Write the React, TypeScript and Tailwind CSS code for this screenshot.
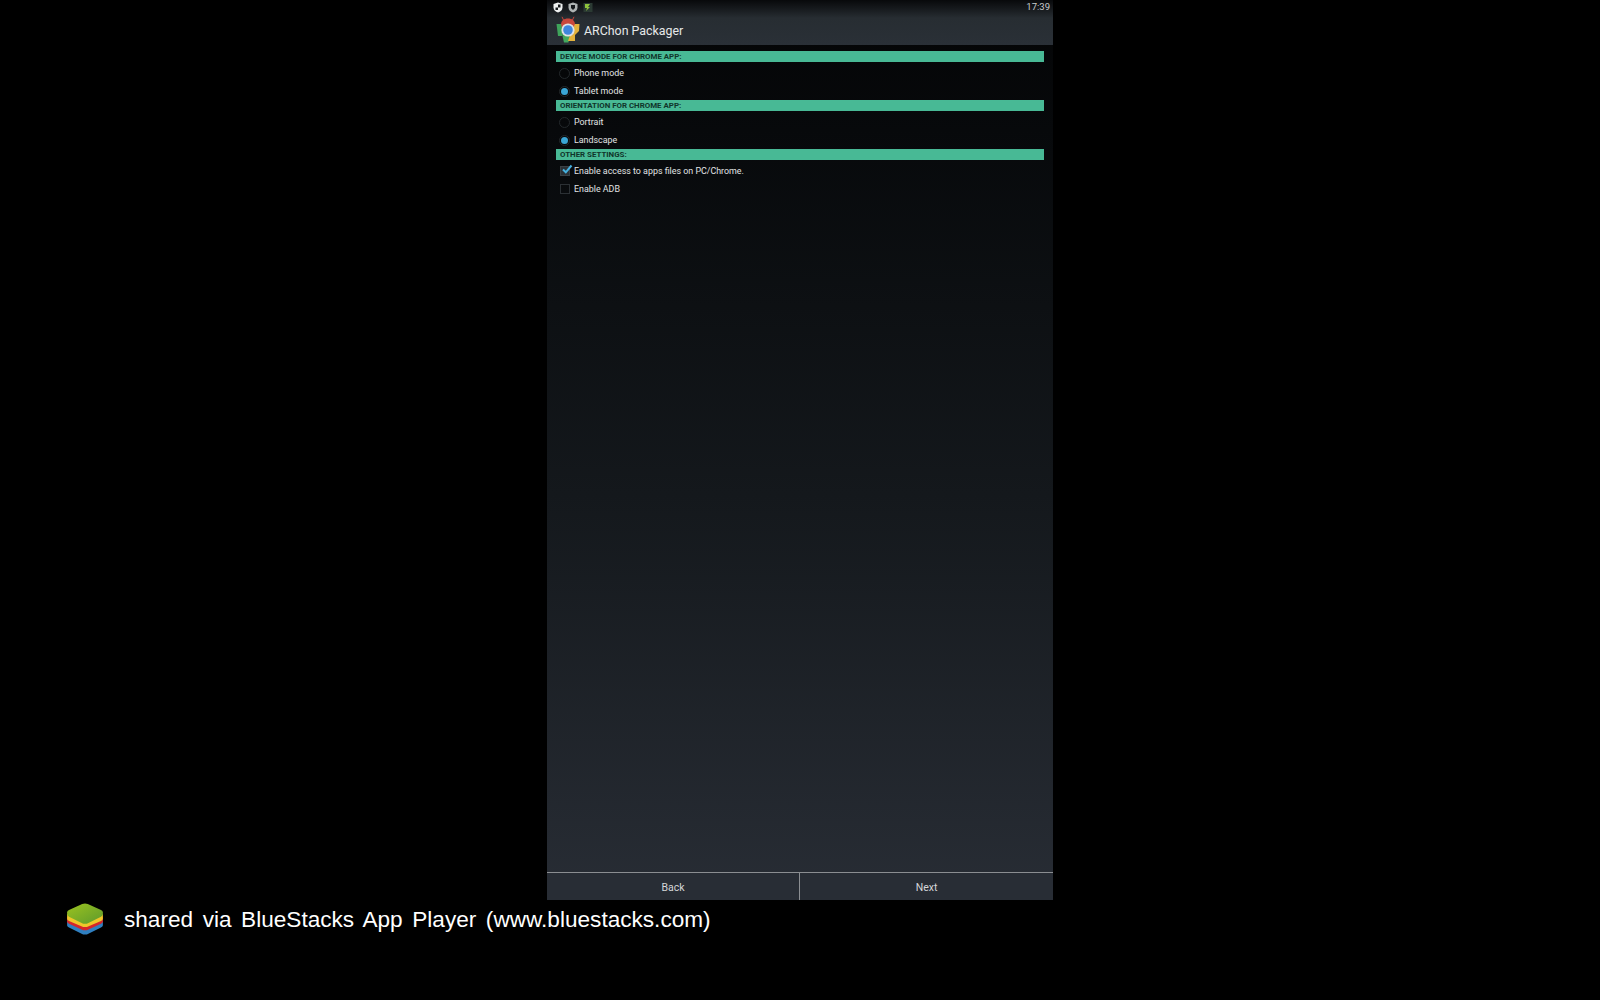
const settingGroups = [
    {
        title: "DEVICE MODE FOR CHROME APP:",
        type: "radio",
        options: [
            { label: "Phone mode", checked: false },
            { label: "Tablet mode", checked: true },
        ],
    },
    {
        title: "ORIENTATION FOR CHROME APP:",
        type: "radio",
        options: [
            { label: "Portrait", checked: false },
            { label: "Landscape", checked: true },
        ],
    },
    {
        title: "OTHER SETTINGS:",
        type: "checkbox",
        options: [
            { label: "Enable access to apps files on PC/Chrome.", checked: true },
            { label: "Enable ADB", checked: false },
        ],
    },
];

const RadioMark = ({ checked }: { checked: boolean }) => (
    <span className="w-[11px] h-[11px] rounded-full border border-[#23282b] flex items-center justify-center shrink-0">
        {checked && <span className="w-[7px] h-[7px] rounded-full bg-[#3aa6d6]" />}
    </span>
);

const CheckMark = ({ checked }: { checked: boolean }) => (
    <span className={`relative ml-[1px] w-[10px] h-[10px] border shrink-0 ${checked ? "border-[#3a4044] bg-[#2a3035]" : "border-[#2b3034]"}`}>
        {checked && (
            <svg viewBox="0 0 12 12" className="absolute -top-[4px] left-[0px] w-[12px] h-[12px]">
                <path d="M2 6.5 L4.8 9.3 L10.5 2.5" fill="none" stroke="#45b0de" strokeWidth="2" />
            </svg>
        )}
    </span>
);

const AppIcon = () => (
    <svg viewBox="0 0 24 27" className="w-[24px] h-[27px] shrink-0 -mt-[2px]">
        <path d="M7.5 4 L6 0.8 M16.5 4 L18 0.8" stroke="#c8453a" strokeWidth="1" />
        <path d="M5 9 C5 4.5 8 2.5 12 2.5 C16 2.5 19 4.5 19 9 Z" fill="#c9473c" />
        <path d="M0.5 8 H6 V20 H2 Z" fill="#3fa45b" />
        <path d="M18 8 H23.5 L23 15 L19 19 V22 H16 Z" fill="#e3b23c" />
        <path d="M6 18 H14 L12.5 26.5 H8 Z" fill="#43a85e" />
        <path d="M14 19 H19 V25 H12 Z" fill="#e3b23c" />
        <path d="M5 8 H19 L17 12 H6 Z" fill="#cf4a3d" />
        <circle cx="12" cy="14" r="6.6" fill="#dfe3e6" />
        <circle cx="12" cy="14" r="4.8" fill="#3f86de" />
    </svg>
);

const ShieldIcon = ({ fill, inner }: { fill: string; inner: string }) => (
    <svg viewBox="0 0 10 11" className="w-[10px] h-[11px]">
        <path d="M5 0.5 L9.5 2 V5.5 C9.5 8 7.5 9.8 5 10.5 C2.5 9.8 0.5 8 0.5 5.5 V2 Z" fill={fill} />
        <path d={inner} fill="#14181b" />
    </svg>
);

const BlueStacksLogo = () => (
    <svg viewBox="0 0 40 34" className="w-[38px] h-[32px] shrink-0 -mt-[1px]">
        <defs>
            <linearGradient id="stackTop" x1="0" y1="0" x2="1" y2="1">
                <stop offset="0" stopColor="#9cc31f" />
                <stop offset="1" stopColor="#5d9a2c" />
            </linearGradient>
        </defs>
        <path d="M1 19 Q1 17 3 16 L20 8 L37 16 Q39 17 39 19 V24 Q39 25 37 26 L22 33.5 H18 L3 26 Q1 25 1 24 Z" fill="#2f7fc0" />
        <path d="M1 15 L20 5 L39 15 V20 Q39 21 37 22 L22 29 H18 L3 22 Q1 21 1 20 Z" fill="#d5262b" />
        <path d="M1 12 L20 3 L39 12 V17 Q39 18 37 19 L22 25.5 H18 L3 19 Q1 18 1 17 Z" fill="#efc62a" />
        <path d="M1 10 Q1 8.5 3 7.5 L17 1 Q20 0 23 1 L37 7.5 Q39 8.5 39 10 V12 Q39 13.5 37 14.5 L22 22 H18 L3 14.5 Q1 13.5 1 12 Z" fill="url(#stackTop)" />
    </svg>
);

const App = () => {
    return (
        <div className="w-[1600px] h-[1000px] bg-black flex flex-col overflow-hidden font-['Roboto',sans-serif]">
            <div className="ml-[547px] w-[506px] h-[900px] flex flex-col bg-gradient-to-b from-[#040506] via-[#14181c] via-55% to-[#282d35]">
                <div className="h-[45px] shrink-0 bg-gradient-to-b from-[#08090b] via-[#272d32] via-40% to-[#2a3037] flex flex-col">
                    <div className="h-[15px] flex items-center justify-between pl-[6px] pr-[3px]">
                        <div className="flex items-center gap-[5px]">
                            <ShieldIcon fill="#eef0f0" inner="M5 2.5 H7.5 V5.5 H5 Z M2.5 5.5 H5 V8 H2.5 Z" />
                            <ShieldIcon fill="#aeb3b3" inner="M3 3 H7 V6 L5 8 L3 6 Z" />
                            <svg viewBox="0 0 10 11" className="w-[10px] h-[11px]">
                                <rect x="0.5" y="1" width="9" height="9" fill="#2b3a33" />
                                <path d="M2 2 H7 L5 5 H7 L3 9 L4 6 H2 Z" fill="#8fc43c" />
                            </svg>
                        </div>
                        <span className="text-[9.5px] text-[#c9cccd]">17:39</span>
                    </div>
                    <div className="flex items-center gap-[4px] pl-[9px] h-[30px]">
                        <AppIcon />
                        <span className="text-[12.4px] text-[#e6e8e9] pt-[2px]">ARChon Packager</span>
                    </div>
                </div>

                <div className="flex-1 flex flex-col pt-[6px] px-[9px]">
                    {settingGroups.map((group) => (
                        <div key={group.title} className="flex flex-col">
                            <div className="h-[11px] bg-[#48b995] pl-[4px] flex items-center text-[7.9px] font-bold text-[#10352a]">
                                {group.title}
                            </div>
                            <div className="flex flex-col pt-[2px]">
                                {group.options.map((option) => (
                                    <div key={option.label} className="h-[18px] flex items-center gap-[4px] pl-[3px] text-[8.9px] text-[#e2e4e5]">
                                        {group.type === "radio" ? <RadioMark checked={option.checked} /> : <CheckMark checked={option.checked} />}
                                        <span className="pt-[2px]">{option.label}</span>
                                    </div>
                                ))}
                            </div>
                        </div>
                    ))}
                </div>

                <div className="h-[28px] shrink-0 border-t border-[#8b8e92] bg-[#282d35] flex text-[10.5px] text-[#d4d6d8]">
                    <div className="w-[253px] border-r border-[#8b8e92] flex items-center justify-center pt-[2px]">Back</div>
                    <div className="flex-1 flex items-center justify-center pt-[2px]">Next</div>
                </div>
            </div>

            <div className="flex items-center pl-[66px] pt-[1px] h-[38px]">
                <BlueStacksLogo />
                <span className="ml-[20px] text-[22.6px] text-white whitespace-nowrap font-['Liberation_Sans',sans-serif] [word-spacing:3.3px]">
                    shared via BlueStacks App Player (www.bluestacks.com)
                </span>
            </div>
        </div>
    );
};

export default App;
